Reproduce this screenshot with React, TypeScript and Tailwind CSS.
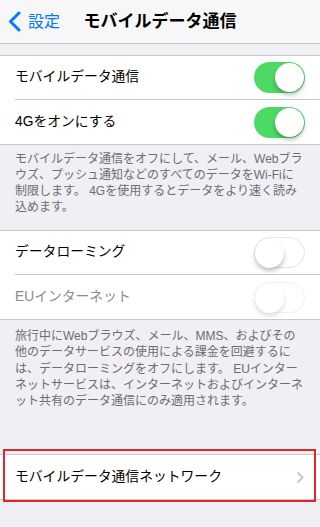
import React from "react";

const font = { fontFamily: '"Liberation Sans", "Noto Sans CJK JP", sans-serif' };

function Toggle({ on, disabled }: { on: boolean; disabled?: boolean }) {
  return (
    <div
      className={
        "relative h-[31px] w-[51px] shrink-0 rounded-full " +
        (on ? "bg-[#4cd964]" : "border-[1.5px] border-[#e5e5ea] bg-white") +
        (disabled ? " opacity-50" : "")
      }
    >
      <div
        className={
          "absolute top-[1px] h-[29px] w-[29px] rounded-full bg-white shadow-[0_3px_4px_rgba(0,0,0,0.25)] " +
          (on ? "right-[1px]" : "-left-[0.5px] -top-[0.5px]")
        }
      />
    </div>
  );
}

function Row({ label, last, children, muted }: { label: string; last?: boolean; children?: React.ReactNode; muted?: boolean }) {
  return (
    <div className="flex h-[44px] items-center bg-white pl-[15px]">
      <div className={"flex h-full flex-1 items-center pr-[15px] " + (last ? "" : "border-b border-[#c8c7cc]")}>
        <span className={"flex-1 text-[13.8px] " + (muted ? "text-[#8a8a8f]" : "text-[#000]")}>{label}</span>
        {children}
      </div>
    </div>
  );
}

export default function App() {
  return (
    <div className="h-[527px] w-[320px] overflow-hidden bg-[#efeff4]" style={font}>
      <div className="relative flex h-[44px] items-center justify-center border-b border-[#c4c4c8] bg-[#f7f7f8]">
        <div className="absolute left-[8px] top-0 flex h-full items-center gap-[7px] text-[#007aff]">
          <svg width="13" height="21" viewBox="0 0 13 21">
            <path d="M11 2 L2.5 10.5 L11 19" fill="none" stroke="#007aff" strokeWidth="3" strokeLinecap="round" strokeLinejoin="round" />
          </svg>
          <span className="text-[16px]">設定</span>
        </div>
        <span className="text-[17px] font-bold text-black">モバイルデータ通信</span>
      </div>

      <div className="mt-[11px] border-y border-[#c8c7cc]">
        <Row label="モバイルデータ通信">
          <Toggle on />
        </Row>
        <Row label="4Gをオンにする" last>
          <Toggle on />
        </Row>
      </div>
      <div className="h-[85px] px-[15px] pt-[6px] text-[12px] leading-[16px] text-[#6d6d72] whitespace-nowrap">
        モバイルデータ通信をオフにして、メール、Webブラ
        <br />
        ウズ、プッシュ通知などのすべてのデータをWi-Fiに
        <br />
        制限します。 4Gを使用するとデータをより速く読み
        <br />
        込めます。
      </div>

      <div className="border-y border-[#c8c7cc]">
        <Row label="データローミング">
          <Toggle on={false} />
        </Row>
        <Row label="EUインターネット" last muted>
          <Toggle on={false} disabled />
        </Row>
      </div>
      <div className="h-[134px] px-[15px] pt-[8px] text-[12px] leading-[16.3px] text-[#6d6d72] whitespace-nowrap">
        旅行中にWebブラウズ、メール、MMS、およびその
        <br />
        他のデータサービスの使用による課金を回避するに
        <br />
        は、データローミングをオフにします。 EUインター
        <br />
        ネットサービスは、インターネットおよびインターネ
        <br />
        ット共有のデータ通信にのみ適用されます。
      </div>

      <div className="relative">
        <div className="border-y border-[#c8c7cc]">
          <Row label="モバイルデータ通信ネットワーク" last>
            <svg width="8" height="13" viewBox="0 0 8 13" className="mr-[1px]">
              <path d="M1.5 1.5 L6.5 6.5 L1.5 11.5" fill="none" stroke="#c7c7cc" strokeWidth="2" />
            </svg>
          </Row>
        </div>
        <div className="pointer-events-none absolute -top-[5px] left-[3px] h-[53px] w-[313px] border-2 border-solid border-[#e0262d]" />
      </div>
    </div>
  );
}
